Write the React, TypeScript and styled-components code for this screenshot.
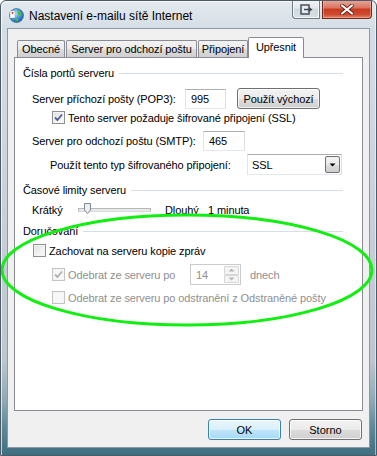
import React from 'react';
import styled, { createGlobalStyle } from 'styled-components';

const Global = createGlobalStyle`
  html, body { margin: 0; padding: 0; background: #ffffff; }
  body { font-family: "Liberation Sans", Arial, sans-serif; font-size: 11px; color: #000; }
  * { box-sizing: border-box; }
`;

const Window = styled.div`
  position: relative;
  width: 377px;
  height: 456px;
  display: flex;
  flex-direction: column;
  padding: 0 6px 7px 6px;
  border: 1px solid #4d5b66;
  border-radius: 6px 6px 0 0;
  background: linear-gradient(
    to bottom,
    #e3e9ef 0px,
    #d6dee5 27px,
    #c9d2da 200px,
    #bcc6ce 360px,
    #8ea9b5 400px,
    #5f8a9b 425px,
    #3d6d80 456px
  );
  box-shadow: inset 1px 1px 0 rgba(255, 255, 255, 0.7), inset -1px 0 0 rgba(255, 255, 255, 0.5);
  overflow: hidden;
`;

const TitleBar = styled.div`
  height: 27px;
  display: flex;
  align-items: flex-start;
`;

const TitleIcon = styled.svg`
  width: 16px;
  height: 16px;
  margin: 6px 0 0 1px;
  flex: none;
`;

const TitleText = styled.div`
  font-family: "Liberation Sans", Arial, sans-serif;
  font-size: 12px;
  margin: 8px 0 0 5px;
  color: #000;
`;

const CaptionButtons = styled.div`
  margin: -1px -2px 0 auto;
  display: flex;
  gap: 2px;
`;

const CapButton = styled.div<{ $close?: boolean }>`
  width: ${(p) => (p.$close ? 50 : 28)}px;
  height: 19px;
  display: flex;
  align-items: center;
  justify-content: center;
  border: 1px solid ${(p) => (p.$close ? '#6b2a1f' : '#6f7b86')};
  border-top: none;
  border-radius: ${(p) => (p.$close ? '0 0 4px 0' : '0 0 0 4px')};
  background: ${(p) =>
    p.$close
      ? 'linear-gradient(to bottom, #e9a99c 0%, #d9735f 45%, #c73a20 50%, #cf4a2e 80%, #e0866a 100%)'
      : 'linear-gradient(to bottom, #f1f4f7 0%, #e1e7ec 45%, #d0d8df 50%, #d8dfe5 100%)'};
  box-shadow: inset 0 0 0 1px ${(p) => (p.$close ? 'rgba(255,190,170,0.5)' : 'rgba(255,255,255,0.7)')};
`;

const Client = styled.div`
  flex: 1;
  display: flex;
  flex-direction: column;
  background: #f0f0f0;
  border: 1px solid #8c98a3;
  padding: 8px 6px 0 6px;
`;

const TabStrip = styled.div`
  position: relative;
  z-index: 1;
  height: 21px;
  margin-bottom: -1px;
  display: flex;
  align-items: flex-end;
  padding-left: 3px;
  gap: 1px;
`;

const Tab = styled.div<{ $w: number; $active?: boolean }>`
  width: ${(p) => p.$w}px;
  height: ${(p) => (p.$active ? 21 : 17)}px;
  margin-bottom: ${(p) => (p.$active ? 0 : 1)}px;
  margin-left: ${(p) => (p.$active ? -1 : 0)}px;
  border: 1px solid #898c95;
  border-bottom: none;
  border-radius: 2px 2px 0 0;
  background: ${(p) =>
    p.$active
      ? '#ffffff'
      : 'linear-gradient(to bottom, #f2f2f2 0%, #ebebeb 50%, #dddddd 51%, #cfcfcf 100%)'};
  display: flex;
  align-items: center;
  justify-content: center;
  padding-bottom: ${(p) => (p.$active ? 3 : 0)}px;
  white-space: nowrap;
  letter-spacing: -0.1px;
`;

const Panel = styled.div`
  height: 354px;
  border: 1px solid #898c95;
  background: #ffffff;
  padding: 8px 0 0 0;
  display: flex;
  flex-direction: column;
  letter-spacing: -0.1px;
`;

const GroupHeader = styled.div<{ $mt?: number }>`
  height: 14px;
  margin: ${(p) => p.$mt ?? 0}px 19px 0 8px;
  display: flex;
  align-items: center;
  gap: 5px;
  white-space: nowrap;
`;

const GroupLine = styled.div`
  flex: 1;
  height: 1px;
  background: #d5dfe5;
`;

const Row = styled.div<{ $indent: number; $h: number; $mt: number }>`
  display: flex;
  align-items: center;
  height: ${(p) => p.$h}px;
  margin: ${(p) => p.$mt}px 0 0 ${(p) => p.$indent}px;
  white-space: nowrap;
`;

const Label = styled.span<{ $w?: number; $disabled?: boolean; $ml?: number }>`
  display: inline-block;
  width: ${(p) => (p.$w ? `${p.$w}px` : 'auto')};
  flex: none;
  margin-left: ${(p) => p.$ml ?? 0}px;
  color: ${(p) => (p.$disabled ? '#8f8f8f' : '#000')};
`;

const TextBox = styled.div<{ $w: number; $h?: number; $disabled?: boolean }>`
  width: ${(p) => p.$w}px;
  height: ${(p) => p.$h ?? 20}px;
  flex: none;
  border: 1px solid #abadb3;
  border-left-color: #e2e3ea;
  border-right-color: #dbdfe6;
  border-bottom-color: #e3e9ef;
  background: #fff;
  display: flex;
  align-items: center;
  padding-left: 5px;
  color: ${(p) => (p.$disabled ? '#8f8f8f' : '#000')};
`;

const PushButton = styled.div<{ $w: number; $default?: boolean; $ml?: number }>`
  width: ${(p) => p.$w}px;
  height: 21px;
  flex: none;
  margin-left: ${(p) => p.$ml ?? 0}px;
  border: 1px solid ${(p) => (p.$default ? '#3c7fb1' : '#707070')};
  border-radius: 3px;
  background: ${(p) =>
    p.$default
      ? 'linear-gradient(to bottom, #eaf6fd 0%, #d9f0fc 50%, #bee6fd 51%, #a7d9f5 100%)'
      : 'linear-gradient(to bottom, #f2f2f2 0%, #ebebeb 50%, #dddddd 51%, #cfcfcf 100%)'};
  box-shadow: inset 0 0 0 1px rgba(255, 255, 255, 0.75);
  display: flex;
  align-items: center;
  justify-content: center;
  white-space: nowrap;
`;

const CheckBox = styled.div<{ $disabled?: boolean }>`
  width: 13px;
  height: 13px;
  flex: none;
  border: 1px solid ${(p) => (p.$disabled ? '#c3c3c3' : '#8e8f8f')};
  background: ${(p) =>
    p.$disabled ? '#f7f7f7' : 'linear-gradient(135deg, #dcdcdc 0%, #f0f0f0 50%, #fbfbfb 100%)'};
  box-shadow: inset 0 0 0 1px ${(p) => (p.$disabled ? '#f4f4f4' : '#f4f4f4')};
  display: flex;
  align-items: center;
  justify-content: center;
`;

const CheckGap = styled.span<{ $w: number }>`
  display: inline-block;
  width: ${(p) => p.$w}px;
  flex: none;
`;

const Select = styled.div`
  width: 95px;
  height: 21px;
  flex: none;
  border: 1px solid #abadb3;
  border-left-color: #e2e3ea;
  border-right-color: #dbdfe6;
  border-bottom-color: #e3e9ef;
  background: #fff;
  display: flex;
  align-items: center;
  padding: 1px 1px 1px 4px;
`;

const SelectValue = styled.span`
  flex: 1;
`;

const DropButton = styled.div`
  width: 15px;
  height: 17px;
  border: 1px solid #707070;
  border-radius: 2px;
  background: linear-gradient(to bottom, #f2f2f2 0%, #ebebeb 50%, #dddddd 51%, #cfcfcf 100%);
  display: flex;
  align-items: center;
  justify-content: center;
`;

const SliderTrack = styled.div`
  position: relative;
  width: 73px;
  height: 4px;
  flex: none;
  border: 1px solid #b8b8b8;
  border-bottom-color: #dadada;
  background: #e7eaea;
`;

const SliderThumb = styled.svg`
  position: absolute;
  left: 5px;
  top: -6px;
  width: 7px;
  height: 11px;
`;

const SpinBox = styled.div`
  width: 51px;
  height: 21px;
  flex: none;
  margin-left: 0;
  border: 1px solid #c9cbd0;
  background: #fff;
  display: flex;
  align-items: center;
  padding: 1px 1px 1px 5px;
  color: #8f8f8f;
`;

const SpinValue = styled.span`
  flex: 1;
`;

const SpinButtons = styled.div`
  width: 15px;
  height: 17px;
  display: flex;
  flex-direction: column;
`;

const SpinHalf = styled.div`
  flex: 1;
  border: 1px solid #d6d6d6;
  border-radius: 1px;
  background: #f4f4f4;
  display: flex;
  align-items: center;
  justify-content: center;
`;

const ButtonRow = styled.div`
  margin-top: 8px;
  margin-right: 1px;
  display: flex;
  justify-content: flex-end;
  gap: 8px;
`;

const Overlay = styled.svg`
  position: absolute;
  left: -1px;
  top: -1px;
  width: 377px;
  height: 456px;
  pointer-events: none;
`;

const Check = ({ disabled }: { disabled?: boolean }) => (
  <svg width="9" height="9" viewBox="0 0 9 9">
    <path
      d="M1 4.5 L3.5 7 L8 1.5"
      fill="none"
      stroke={disabled ? '#b0b0b0' : '#4a5f97'}
      strokeWidth="1.8"
      strokeLinejoin="round"
    />
  </svg>
);

const Arrow = ({ up, color }: { up?: boolean; color: string }) => (
  <svg width="7" height="4" viewBox="0 0 7 4">
    <path d={up ? 'M0.5 3.5 L3.5 0.5 L6.5 3.5 Z' : 'M0.5 0.5 L6.5 0.5 L3.5 3.5 Z'} fill={color} />
  </svg>
);

export default function App() {
  return (
    <>
      <Global />
      <Window>
        <TitleBar>
          <TitleIcon viewBox="0 0 16 16">
            <defs>
              <radialGradient id="gl" cx="0.4" cy="0.35" r="0.7">
                <stop offset="0" stopColor="#bfe3ff" />
                <stop offset="0.6" stopColor="#3f8fd6" />
                <stop offset="1" stopColor="#1d5aa0" />
              </radialGradient>
            </defs>
            <circle cx="8.5" cy="8.5" r="7" fill="url(#gl)" stroke="#2a5d8f" strokeWidth="0.6" />
            <path d="M9 3 C12 3.5 14 6 13.5 9 C12 8 11 9 10 7.5 C9.5 6 10 5 9 3 Z" fill="#4fb848" />
            <path d="M7 11 C9 10.5 11 12 10 14.5 C8.5 14.8 7.5 13 7 11 Z" fill="#4fb848" />
            <rect x="2" y="4" width="5" height="7" rx="0.5" fill="#ffffff" stroke="#8aa0b5" strokeWidth="0.5" />
            <circle cx="4.5" cy="6" r="1" fill="#d9332a" />
          </TitleIcon>
          <TitleText>Nastavení e-mailu sítě Internet</TitleText>
          <CaptionButtons>
            <CapButton>
              <svg width="13" height="11" viewBox="0 0 13 11">
                <rect x="1" y="1" width="8" height="9" fill="none" stroke="#3f4750" strokeWidth="1.4" />
                <rect x="2.5" y="2.5" width="5" height="6" fill="#e8edf1" />
                <path d="M4 5.5 H10" stroke="#3f4750" strokeWidth="1.6" />
                <path d="M9 3 L12.5 5.5 L9 8 Z" fill="#3f4750" />
              </svg>
            </CapButton>
            <CapButton $close>
              <svg width="14" height="11" viewBox="0 0 14 11">
                <path d="M2 1.5 L12 9.5 M12 1.5 L2 9.5" stroke="#5a1a10" strokeWidth="3.6" strokeLinecap="round" />
                <path d="M2 1.5 L12 9.5 M12 1.5 L2 9.5" stroke="#ffffff" strokeWidth="2.2" strokeLinecap="round" />
              </svg>
            </CapButton>
          </CaptionButtons>
        </TitleBar>
        <Client>
          <TabStrip>
            <Tab $w={48}>Obecné</Tab>
            <Tab $w={131}>Server pro odchozí poštu</Tab>
            <Tab $w={50}>Připojení</Tab>
            <Tab $w={56} $active>
              Upřesnit
            </Tab>
          </TabStrip>
          <Panel>
            <GroupHeader>
              Čísla portů serveru
              <GroupLine />
            </GroupHeader>
            <Row $indent={17} $h={21} $mt={8}>
              <Label $w={153}>Server příchozí pošty (POP3):</Label>
              <TextBox $w={41}>995</TextBox>
              <PushButton $w={83} $ml={11}>
                Použít výchozí
              </PushButton>
            </Row>
            <Row $indent={37} $h={13} $mt={2}>
              <CheckBox>
                <Check />
              </CheckBox>
              <CheckGap $w={3} />
              <Label>Tento server požaduje šifrované připojení (SSL)</Label>
            </Row>
            <Row $indent={17} $h={20} $mt={7}>
              <Label $w={171}>Server pro odchozí poštu (SMTP):</Label>
              <TextBox $w={42}>465</TextBox>
            </Row>
            <Row $indent={35} $h={21} $mt={3}>
              <Label $w={197}>Použít tento typ šifrovaného připojení:</Label>
              <Select>
                <SelectValue>SSL</SelectValue>
                <DropButton>
                  <Arrow color="#000" />
                </DropButton>
              </Select>
            </Row>
            <GroupHeader $mt={8}>
              Časové limity serveru
              <GroupLine />
            </GroupHeader>
            <Row $indent={17} $h={16} $mt={5}>
              <Label $w={46}>Krátký</Label>
              <SliderTrack>
                <SliderThumb viewBox="0 0 7 11">
                  <path d="M0.5 0.5 H6.5 V7 L3.5 10.5 L0.5 7 Z" fill="#eceeef" stroke="#7f8a93" />
                </SliderThumb>
              </SliderTrack>
              <Label $w={43} $ml={14}>
                Dlouhý
              </Label>
              <Label>1 minuta</Label>
            </Row>
            <GroupHeader $mt={6}>
              Doručování
              <GroupLine />
            </GroupHeader>
            <Row $indent={18} $h={13} $mt={6}>
              <CheckBox />
              <CheckGap $w={3} />
              <Label>Zachovat na serveru kopie zpráv</Label>
            </Row>
            <Row $indent={37} $h={21} $mt={7}>
              <CheckBox $disabled>
                <Check disabled />
              </CheckBox>
              <CheckGap $w={3} />
              <Label $w={122} $disabled>
                Odebrat ze serveru po
              </Label>
              <SpinBox>
                <SpinValue>14</SpinValue>
                <SpinButtons>
                  <SpinHalf>
                    <Arrow up color="#b5b5b5" />
                  </SpinHalf>
                  <SpinHalf>
                    <Arrow color="#b5b5b5" />
                  </SpinHalf>
                </SpinButtons>
              </SpinBox>
              <Label $disabled $ml={9}>
                dnech
              </Label>
            </Row>
            <Row $indent={37} $h={13} $mt={6}>
              <CheckBox $disabled />
              <CheckGap $w={3} />
              <Label $disabled>Odebrat ze serveru po odstranění z Odstraněné pošty</Label>
            </Row>
          </Panel>
          <ButtonRow>
            <PushButton $w={73} $default>
              OK
            </PushButton>
            <PushButton $w={73}>Storno</PushButton>
          </ButtonRow>
        </Client>
        <Overlay viewBox="0 0 377 456">
          <ellipse cx="187" cy="270" rx="185" ry="55" fill="none" stroke="#11ee11" strokeWidth="3" />
        </Overlay>
      </Window>
    </>
  );
}
